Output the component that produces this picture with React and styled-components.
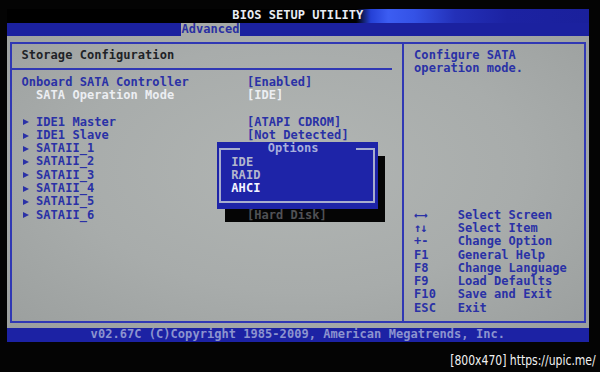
import React from 'react'
import styled, { createGlobalStyle } from 'styled-components'

// one text cell of the 80x25 BIOS screen, as it appears in the photo
const CW = 7.27
const RH = 13.29

const GlobalStyle = createGlobalStyle`
  * { box-sizing: border-box; }
  html, body {
    margin: 0;
    padding: 0;
    background: #040404;
  }
  body {
    width: 600px;
    height: 372px;
    overflow: hidden;
    font-family: "DejaVu Sans Mono", "Liberation Mono", monospace;
  }
`

const Page = styled.div`
  display: flex;
  flex-direction: column;
  width: 600px;
  height: 372px;
`

const Screen = styled.div`
  position: relative;
  width: ${80 * CW}px;
  margin: 9.35px 0 0 7px;
  display: flex;
  flex-direction: column;
  font-size: 12px;
  font-weight: 700;
  line-height: ${RH}px;
  letter-spacing: 0.045px;
  white-space: pre;
`

const TitleBar = styled.div`
  height: ${RH}px;
  text-align: center;
  color: #e9ecf3;
  background: linear-gradient(
    90deg,
    #000 0%,
    #000 60%,
    #2440d6 62.5%,
    #3c5df2 65.5%,
    #3452e6 70%,
    #2330b8 77%,
    #1c22a2 86%,
    #1a209c 100%
  );
`

const TabBar = styled.div`
  height: ${RH}px;
  display: flex;
  padding-left: ${24 * CW}px;
  background: #1b219f;
`

const Tab = styled.div`
  width: ${8 * CW}px;
  background: #a6aaa7;
  color: #2a30a2;
`

const Workspace = styled.div`
  height: ${22 * RH}px;
  padding: ${RH / 2 - 1}px ${CW / 2 - 1}px;
  background: radial-gradient(ellipse at 50% 45%, #b1b5b3 0%, #a8acab 55%, #9b9f9e 100%);
`

const Frame = styled.div`
  height: 100%;
  display: flex;
  border: 2px solid #3038b4;
`

const SetupPanel = styled.div`
  width: ${54 * CW}px;
  flex-shrink: 0;
  padding: ${RH / 2 - 1}px 0 0 ${2 * CW - (CW / 2 + 1)}px;
  border-right: 2px solid #3038b4;
  display: flex;
  flex-direction: column;
`

const HelpPanel = styled.div`
  flex: 1;
  padding: ${RH / 2 - 1}px 0 ${RH / 2 - 1}px ${2 * CW - (CW / 2 + 1)}px;
  display: flex;
  flex-direction: column;
  color: #2a31a6;
`

const SectionTitle = styled.div`
  height: ${RH}px;
  color: #1f2327;
`

const Rule = styled.div`
  height: ${RH}px;
  width: 380px;
  margin-left: ${-(2 * CW - (CW / 2 + 1))}px;
  display: flex;
  align-items: center;

  &::before {
    content: '';
    width: 100%;
    height: 2px;
    background: #3038b4;
  }
`

const Blank = styled.div`
  height: ${RH}px;
`

const SettingRow = styled.div`
  position: relative;
  z-index: 1;
  height: ${RH}px;
  display: grid;
  grid-template-columns: ${31 * CW}px 1fr;
`

const Label = styled.div`
  display: flex;
  align-items: center;
  padding-left: ${p => (p.$indent ? 2 * CW : 0)}px;
  color: ${p => (p.$active ? '#eceef2' : '#2a31a6')};
`

const Value = styled.div`
  color: ${p =>
    p.$tone === 'active' ? '#eceef2' : p.$tone === 'shadow' ? '#505155' : '#2a31a6'};
`

const Arrow = styled.span`
  width: ${2 * CW}px;
  height: ${RH}px;
  display: flex;
  align-items: center;
  padding-left: 1px;

  &::before {
    content: '';
    border-left: 6px solid #2a31a6;
    border-top: 3.5px solid transparent;
    border-bottom: 3.5px solid transparent;
  }
`

const HelpLine = styled.div`
  height: ${RH}px;
`

const KeyLegend = styled.div`
  margin-top: auto;
  display: grid;
  grid-template-columns: ${6 * CW}px 1fr;
  grid-auto-rows: ${RH}px;
`

const KeyName = styled.div`
  letter-spacing: ${p => (p.$glyph ? '-1px' : 'inherit')};
`

const KeyAction = styled.div``

const StatusBar = styled.div`
  height: ${RH}px;
  text-align: center;
  background: #1c22a4;
  color: #8c94cf;
`

const Shadow = styled.div`
  position: absolute;
  z-index: 0;
  top: ${11 * RH}px;
  left: ${30 * CW}px;
  width: ${22 * CW}px;
  height: ${5 * RH}px;
  background: #050505;
`

const Popup = styled.div`
  position: absolute;
  z-index: 2;
  top: ${10 * RH}px;
  left: ${29 * CW - 1}px;
  width: ${22 * CW + 1}px;
  height: ${5 * RH}px;
  padding: ${RH / 2 - 1}px ${CW / 2 - 1}px;
  background: #1e24a8;
`

const PopupFrame = styled.div`
  height: 100%;
  padding: ${RH / 2 - 1}px 0 0 ${2 * CW - (CW / 2 + 1)}px;
  border: 2px solid #a7adcf;
  display: flex;
  flex-direction: column;
`

const PopupTitle = styled.div`
  position: absolute;
  top: 0;
  left: ${3 * CW + 1}px;
  width: ${16 * CW}px;
  height: ${RH}px;
  padding-left: ${4 * CW - 1}px;
  background: #1e24a8;
  color: #a9afdc;
`

const PopupOption = styled.div`
  height: ${RH}px;
  color: ${p => (p.$selected ? '#f4f5ff' : '#b3b7cd')};
`

const Watermark = styled.div`
  margin-top: 10px;
  padding-right: 5px;
  text-align: right;
  color: #f2f2f2;
  font-family: "DejaVu Sans Condensed", "Liberation Sans", sans-serif;
  font-size: 14px;
  line-height: 16px;
  transform: scaleX(0.86);
  transform-origin: right center;
`

const settings = [
  { label: 'Onboard SATA Controller', value: '[Enabled]' },
  { label: 'SATA Operation Mode', value: '[IDE]', indent: true, active: true },
]

const devices = [
  { label: 'IDE1 Master', value: '[ATAPI CDROM]' },
  { label: 'IDE1 Slave', value: '[Not Detected]' },
  { label: 'SATAII_1' },
  { label: 'SATAII_2' },
  { label: 'SATAII_3' },
  { label: 'SATAII_4' },
  { label: 'SATAII_5' },
  { label: 'SATAII_6', value: '[Hard Disk]', shadowed: true },
]

const keys = [
  ['←→', 'Select Screen', true],
  ['↑↓', 'Select Item', true],
  ['+-', 'Change Option'],
  ['F1', 'General Help'],
  ['F8', 'Change Language'],
  ['F9', 'Load Defaults'],
  ['F10', 'Save and Exit'],
  ['ESC', 'Exit'],
]

const options = ['IDE', 'RAID', 'AHCI']

export default function App() {
  return (
    <Page>
      <GlobalStyle />
      <Screen>
        <TitleBar>BIOS SETUP UTILITY</TitleBar>
        <TabBar>
          <Tab>Advanced</Tab>
        </TabBar>
        <Workspace>
          <Frame>
            <SetupPanel>
              <SectionTitle>Storage Configuration</SectionTitle>
              <Rule />
              {settings.map(s => (
                <SettingRow key={s.label}>
                  <Label $indent={s.indent} $active={s.active}>
                    {s.label}
                  </Label>
                  <Value $tone={s.active ? 'active' : undefined}>{s.value}</Value>
                </SettingRow>
              ))}
              <Blank />
              {devices.map(d => (
                <SettingRow key={d.label}>
                  <Label>
                    <Arrow />
                    {d.label}
                  </Label>
                  <Value $tone={d.shadowed ? 'shadow' : undefined}>{d.value}</Value>
                </SettingRow>
              ))}
            </SetupPanel>
            <HelpPanel>
              <HelpLine>Configure SATA</HelpLine>
              <HelpLine>operation mode.</HelpLine>
              <KeyLegend>
                {keys.map(([k, action, glyph]) => (
                  <React.Fragment key={k}>
                    <KeyName $glyph={glyph}>{k}</KeyName>
                    <KeyAction>{action}</KeyAction>
                  </React.Fragment>
                ))}
              </KeyLegend>
            </HelpPanel>
          </Frame>
        </Workspace>
        <StatusBar>v02.67C (C)Copyright 1985-2009, American Megatrends, Inc.</StatusBar>

        <Shadow />
        <Popup>
          <PopupFrame>
            {options.map(o => (
              <PopupOption key={o} $selected={o === 'AHCI'}>
                {o}
              </PopupOption>
            ))}
          </PopupFrame>
          <PopupTitle>Options</PopupTitle>
        </Popup>
      </Screen>
      <Watermark>[800x470] https://upic.me/</Watermark>
    </Page>
  )
}
